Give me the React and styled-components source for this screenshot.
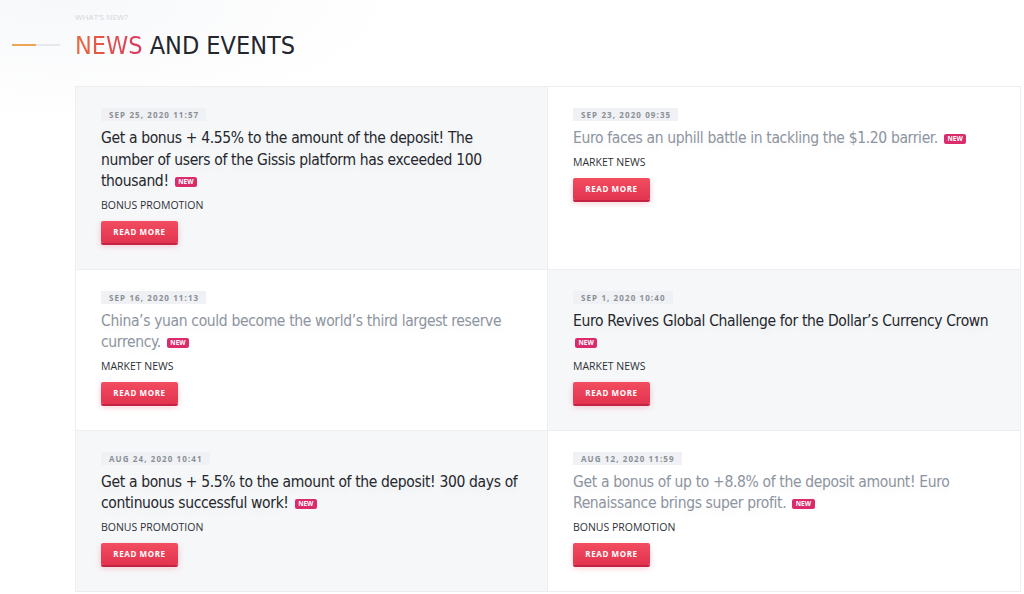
import styled, { createGlobalStyle } from 'styled-components';

const GlobalStyle = createGlobalStyle`
  html, body {
    margin: 0;
    padding: 0;
    background: #ffffff;
    overflow: hidden;
  }
  body {
    font-family: 'Open Sans', sans-serif;
  }
`;

const newsList = [
  {
    id: 1,
    date: 'SEP 25, 2020 11:57',
    title: 'Get a bonus + 4.55% to the amount of the deposit! The number of users of the Gissis platform has exceeded 100 thousand!',
    category: 'BONUS PROMOTION',
    active: true,
  },
  {
    id: 2,
    date: 'SEP 23, 2020 09:35',
    title: 'Euro faces an uphill battle in tackling the $1.20 barrier.',
    category: 'MARKET NEWS',
    active: false,
  },
  {
    id: 3,
    date: 'SEP 16, 2020 11:13',
    title: 'China’s yuan could become the world’s third largest reserve currency.',
    category: 'MARKET NEWS',
    active: false,
  },
  {
    id: 4,
    date: 'SEP 1, 2020 10:40',
    title: 'Euro Revives Global Challenge for the Dollar’s Currency Crown',
    category: 'MARKET NEWS',
    active: true,
  },
  {
    id: 5,
    date: 'AUG 24, 2020 10:41',
    title: 'Get a bonus + 5.5% to the amount of the deposit! 300 days of continuous successful work!',
    category: 'BONUS PROMOTION',
    active: true,
  },
  {
    id: 6,
    date: 'AUG 12, 2020 11:59',
    title: 'Get a bonus of up to +8.8% of the deposit amount! Euro Renaissance brings super profit.',
    category: 'BONUS PROMOTION',
    active: false,
  },
];

const NewsCard = ({ date, title, category, active }) => {
  return (
    <Cell active={active}>
      <DateBadge>{date}</DateBadge>
      <Title active={active}>
        {title} <NewBadge>NEW</NewBadge>
      </Title>
      <Category>{category}</Category>
      <ReadMore>READ MORE</ReadMore>
    </Cell>
  );
};

const App = () => {
  return (
    <Main>
      <GlobalStyle />
      <Header>
        <Decoration>
          <span className='accent' />
          <span className='rest' />
        </Decoration>
        <HeadingBlock>
          <Kicker>WHAT’S NEW?</Kicker>
          <Heading>
            <span className='hot'>NEWS</span> AND EVENTS
          </Heading>
        </HeadingBlock>
      </Header>

      <Grid>
        {newsList.map((it) => (
          <NewsCard
            key={it.id}
            date={it.date}
            title={it.title}
            category={it.category}
            active={it.active}
          />
        ))}
      </Grid>
    </Main>
  );
};

const Main = styled.div`
  width: 1024px;
  height: 594px;
  overflow: hidden;
  background: radial-gradient(ellipse 340px 120px at 60px 0px, #f7f8fa 0%, #ffffff 100%);
`;

const Header = styled.div`
  display: flex;
  align-items: flex-start;
  height: 86px;
`;

const Decoration = styled.div`
  display: flex;
  width: 48px;
  margin: 44px 15px 0 12px;

  .accent {
    width: 24px;
    height: 2px;
    background: #eea55a;
  }

  .rest {
    width: 24px;
    height: 2px;
    background: #e6e8ec;
  }
`;

const HeadingBlock = styled.div`
  display: flex;
  flex-direction: column;
  padding-top: 12px;
`;

const Kicker = styled.div`
  font-family: 'Open Sans', sans-serif;
  font-size: 8px;
  color: #d3d6db;
  line-height: 10px;
  letter-spacing: 0.1px;
`;

const Heading = styled.h1`
  margin: 8px 0 0 0;
  font-family: 'DejaVu Sans Condensed', sans-serif;
  font-weight: 400;
  font-size: 25px;
  line-height: 32px;
  color: #23262c;
  letter-spacing: 0;

  .hot {
    background: linear-gradient(90deg, #e8693d, #d9385f);
    -webkit-background-clip: text;
    background-clip: text;
    color: transparent;
  }
`;

const Grid = styled.div`
  margin-left: 75px;
  width: 945px;
  display: grid;
  grid-template-columns: 472px 473px;
  grid-auto-rows: auto;
  border-top: 1px solid #eceef1;
  border-left: 1px solid #eceef1;
`;

const Cell = styled.div`
  display: flex;
  flex-direction: column;
  align-items: flex-start;
  padding: 21px 26px 26px 25px;
  background: ${(p) => (p.active ? '#f6f7f9' : '#ffffff')};
  border-right: 1px solid #eceef1;
  border-bottom: 1px solid #eceef1;
`;

const DateBadge = styled.div`
  background: #eff1f4;
  color: #8b8f96;
  font-family: 'Open Sans', sans-serif;
  font-weight: 700;
  font-size: 8px;
  letter-spacing: 1.1px;
  line-height: 13px;
  padding: 0 7px 0 8px;
`;

const Title = styled.div`
  margin-top: 7px;
  font-family: 'DejaVu Sans Condensed', sans-serif;
  font-size: 15.5px;
  line-height: 21.5px;
  letter-spacing: -0.35px;
  color: ${(p) => (p.active ? '#24272d' : '#8d949f')};
  text-shadow: 0 4px 10px rgba(0, 0, 0, 0.07);
  max-width: 418px;
`;

const NewBadge = styled.span`
  display: inline-block;
  vertical-align: 2px;
  margin-left: 2px;
  background: #db2b6b;
  color: #ffffff;
  font-family: 'Open Sans', sans-serif;
  font-weight: 700;
  font-size: 6.5px;
  line-height: 10px;
  letter-spacing: 0;
  padding: 0 3.5px;
  border-radius: 2px;
  text-shadow: none;
`;

const Category = styled.div`
  margin-top: 5px;
  font-family: 'Open Sans', sans-serif;
  font-size: 10.5px;
  line-height: 15px;
  color: #2d3036;
`;

const ReadMore = styled.button`
  margin-top: 8px;
  width: 77px;
  height: 22px;
  border: none;
  border-radius: 2px;
  background: linear-gradient(180deg, #f24d60 0%, #e2334f 100%);
  box-shadow: 0 2px 0 #c42344, 0 3px 6px rgba(226, 51, 79, 0.25);
  color: #ffffff;
  font-family: 'Open Sans', sans-serif;
  font-weight: 700;
  font-size: 8px;
  letter-spacing: 0.6px;
  padding: 0;
  cursor: pointer;
`;

export default App;
